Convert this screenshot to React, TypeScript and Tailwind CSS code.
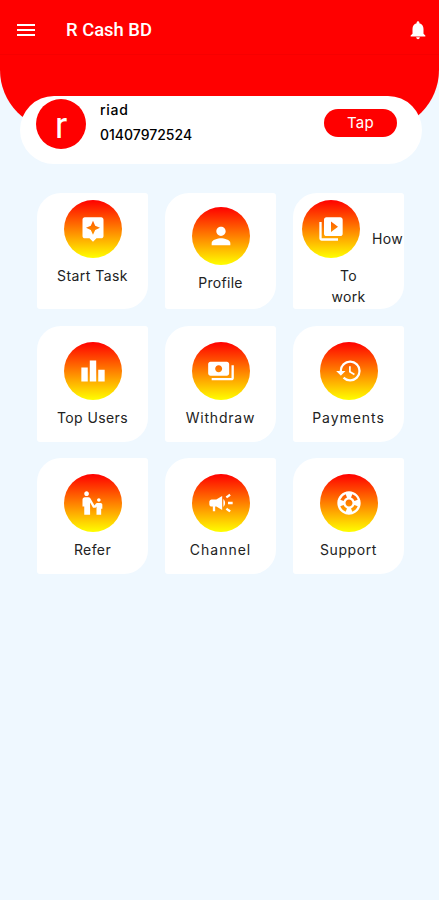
import type { IconType } from 'react-icons';
import {
  MdAssistant,
  MdCampaign,
  MdEscalatorWarning,
  MdHistory,
  MdLeaderboard,
  MdMenu,
  MdNotifications,
  MdPayments,
  MdPerson,
  MdSupport,
  MdVideoLibrary,
} from 'react-icons/md';
import clsx from 'clsx';

interface MenuItem {
  label: string;
  icon: IconType;
  // vertical offset of the tile content
  padding: string;
  tracking: string;
}

const menuItems: MenuItem[] = [
  { label: 'Start Task', icon: MdAssistant, padding: 'pt-[7px]', tracking: 'tracking-[0.45px]' },
  { label: 'Profile', icon: MdPerson, padding: 'pt-[14px]', tracking: 'tracking-[0.3px]' },
  { label: 'How To work', icon: MdVideoLibrary, padding: 'pt-[7px]', tracking: 'tracking-[0.3px]' },
  { label: 'Top Users', icon: MdLeaderboard, padding: 'pt-[16px]', tracking: 'tracking-[0.4px]' },
  { label: 'Withdraw', icon: MdPayments, padding: 'pt-[16px]', tracking: 'tracking-[0.8px]' },
  { label: 'Payments', icon: MdHistory, padding: 'pt-[16px]', tracking: 'tracking-[0.95px]' },
  { label: 'Refer', icon: MdEscalatorWarning, padding: 'pt-[16px]', tracking: 'tracking-[0.4px]' },
  { label: 'Channel', icon: MdCampaign, padding: 'pt-[16px]', tracking: 'tracking-[1px]' },
  { label: 'Support', icon: MdSupport, padding: 'pt-[16px]', tracking: 'tracking-[0.6px]' },
];

function IconCircle({ icon: Icon }: { icon: IconType }) {
  return (
    <span className="flex h-[58px] w-[58px] shrink-0 items-center justify-center rounded-full bg-linear-to-b/srgb from-[#ff0000] to-[#ffff00] text-white">
      <Icon size={28} />
    </span>
  );
}

function MenuTile({ item }: { item: MenuItem }) {
  const isWrapped = item.label === 'How To work';

  return (
    <button
      type="button"
      className={clsx(
        'flex h-[116px] flex-col items-center rounded-tl-[24px] rounded-tr-[3px] rounded-br-[24px] rounded-bl-[3px] bg-white text-[14px] leading-[21px] text-[#222]',
        item.padding,
        item.tracking,
      )}
    >
      {isWrapped ? (
        <>
          {/* The first word sits beside the icon, the rest wraps below */}
          <span className="flex w-full items-center pl-[9px]">
            <IconCircle icon={item.icon} />
            <span className="mt-[18px] ml-[12px]">How</span>
          </span>
          <span className="mt-[7px]">To</span>
          <span>work</span>
        </>
      ) : (
        <>
          <IconCircle icon={item.icon} />
          <span className="mt-[7px]">{item.label}</span>
        </>
      )}
    </button>
  );
}

export default function App() {
  return (
    <div className="min-h-screen bg-[#eff8ff] font-['Inter',sans-serif]">
      {/* App bar */}
      <div className="h-[130px] rounded-b-[60px] bg-[#ff0000]">
        <header className="flex h-[55px] items-center border-b border-[#f60000] pt-[5px] pr-[10px] pl-[14px] text-white">
          <MdMenu size={24} />
          <h1 className="ml-[28px] font-['Roboto',sans-serif] text-[18.4px] font-medium">R Cash BD</h1>
          <MdNotifications size={22} className="ml-auto" />
        </header>
      </div>

      {/* User card */}
      <section className="relative -mt-[34px] mr-[17px] ml-[20px] flex h-[68px] items-start rounded-[34px] bg-white pr-[25px] pl-[16px]">
        <div className="mt-[3px] flex h-[50px] w-[50px] items-center justify-center rounded-full bg-[#ff0000] pt-[4px] font-['Roboto',sans-serif] text-[36px] leading-none text-white">
          r
        </div>
        <div className="mt-px ml-[14px] text-[14px] leading-[25px] font-medium text-black">
          <p className="tracking-[0.7px]">riad</p>
          <p>01407972524</p>
        </div>
        <button
          type="button"
          className="mt-[13px] ml-auto h-[28px] w-[73px] rounded-full bg-[#ff0000] text-[15px] leading-[26px] tracking-[0.3px] text-white"
        >
          Tap
        </button>
      </section>

      {/* Menu */}
      <main className="mt-[29px] mr-[35px] ml-[37px] grid grid-cols-[111px_111px_111px] gap-x-[17px] gap-y-[16.5px]">
        {menuItems.map((item) => (
          <MenuTile key={item.label} item={item} />
        ))}
      </main>
    </div>
  );
}
